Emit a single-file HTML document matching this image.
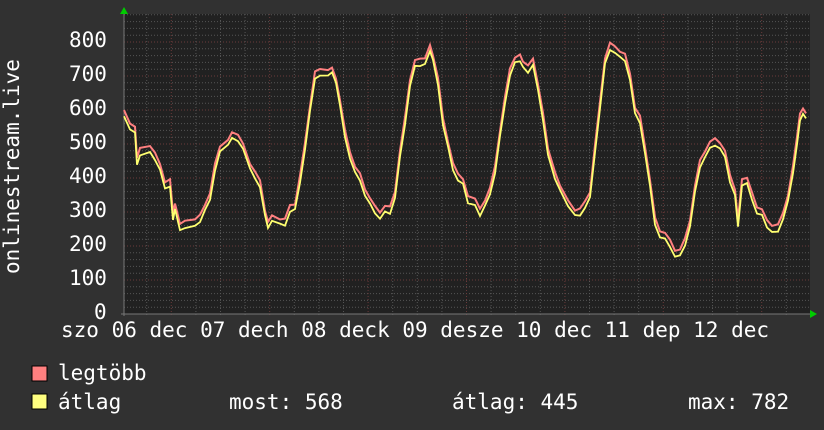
<!DOCTYPE html>
<html><head><meta charset="utf-8"><style>
body{margin:0;background:#313131;width:824px;height:430px;overflow:hidden;font-family:"DejaVu Sans Mono","Liberation Mono",monospace;color:#fff}
.t{position:absolute;font-size:21px;white-space:pre;line-height:1}
</style></head><body>
<svg width="824" height="430" style="position:absolute;left:0;top:0" id="s">
<rect x="124" y="14" width="686" height="300" fill="#212121"/>
<g id="g"></g>
<line x1="121" y1="314" x2="812" y2="314" stroke="#777" stroke-width="1"/>
<line x1="124" y1="12" x2="124" y2="316" stroke="#777" stroke-width="1"/>
<polygon points="120,14 124,7 128,14" fill="#0c0"/>
<polygon points="810,310 817,314 810,318" fill="#0c0"/>
<polyline id="p1" fill="none" stroke="#ff8080" stroke-width="2"/>
<polyline id="p2" fill="none" stroke="#ffff70" stroke-width="1.8"/>
<rect x="32" y="366" width="15" height="15" fill="#ff8080" stroke="#000"/>
<rect x="32" y="394" width="15" height="15" fill="#ffff80" stroke="#000"/>
</svg>
<div class="t" style="left:69px;top:30px">800</div>
<div class="t" style="left:69px;top:64px">700</div>
<div class="t" style="left:69px;top:98px">600</div>
<div class="t" style="left:69px;top:132px">500</div>
<div class="t" style="left:69px;top:166px">400</div>
<div class="t" style="left:69px;top:200px">300</div>
<div class="t" style="left:69px;top:234px">200</div>
<div class="t" style="left:69px;top:268px">100</div>
<div class="t" style="left:94px;top:302px">0</div>
<div class="t" style="left:2px;top:274px;transform:rotate(-90deg);transform-origin:0 0;">onlinestream.live</div>
<div class="t" style="left:61px;top:320px">szo 06 dec 07 dech 08 deck 09 desze 10 dec 11 dep 12 dec</div>
<div class="t" style="left:58px;top:363px">legtöbb</div>
<div class="t" style="left:58px;top:392px">átlag</div>
<div class="t" style="left:229px;top:392px">most: 568</div>
<div class="t" style="left:452px;top:392px">átlag: 445</div>
<div class="t" style="left:688px;top:392px">max: 782</div>
<script>
var g=document.getElementById('g'),h='';
for(var v=0;v<=880;v+=20){var y=314-v*0.34;if(y<14)break;var maj=v%100==0;
h+='<line x1="124" x2="810" y1="'+y+'" y2="'+y+'" stroke="'+(maj?'#6a3a3a':'#555')+'" stroke-dasharray="1,2"/>';}
for(var k=-2;k<30;k++){var x=171.3+24.6*k;if(x<126||x>810)continue;var maj=((k%4)+4)%4==0;
h+='<line y1="14" y2="316" x1="'+x+'" x2="'+x+'" stroke="'+(maj?'#6a3a3a':'#555')+'" stroke-dasharray="1,2"/>';}
g.innerHTML=h;
var d=[124,590,130,540,135,530,137,440,140,470,150,480,155,450,160,420,165,380,170,370,173,290,175,300,180,260,185,250,195,270,200,270,205,300,210,340,215,420,220,480,228,510,232,520,238,500,243,500,250,440,255,400,260,360,265,300,268,250,272,280,280,270,285,260,290,300,295,310,300,380,305,490,310,600,315,680,320,710,328,710,332,720,336,680,340,620,345,510,350,460,355,420,360,390,365,350,370,320,375,300,380,285,385,290,390,300,395,350,400,450,405,560,410,680,415,720,420,730,425,740,430,770,433,740,438,680,443,560,448,480,453,430,458,400,463,370,468,330,475,320,480,300,485,310,490,350,495,420,500,520,505,620,510,700,515,740,520,750,523,730,528,720,533,720,538,660,543,580,548,460,555,390,560,360,568,320,575,290,580,290,585,310,590,350,595,470,600,600,605,750,610,770,615,760,620,770,625,740,630,680,635,600,640,560,645,470,650,380,655,260,660,230,665,220,670,190,675,180,680,170,685,190,690,270,695,360,700,420,705,470,710,490,715,490,720,490,725,460,730,390,735,350,738,270,742,380,747,380,752,340,757,300,762,280,767,260,772,250,778,240,783,280,788,330,793,420,797,500,800,570,803,580,806,570];
var a=[],b=[];
for(var i=0;i<d.length;i+=2){var x=d[i],v=d[i+1];
var n=Math.sin(x*1.7)*8+Math.sin(x*0.9)*6;
b.push(x+','+(314-(v+n)*0.34));a.push(x+','+(314-(v+n+12+Math.abs(Math.sin(x*2.3))*10)*0.34));}
document.getElementById('p1').setAttribute('points',a.join(' '));
document.getElementById('p2').setAttribute('points',b.join(' '));
</script>
</body></html>
